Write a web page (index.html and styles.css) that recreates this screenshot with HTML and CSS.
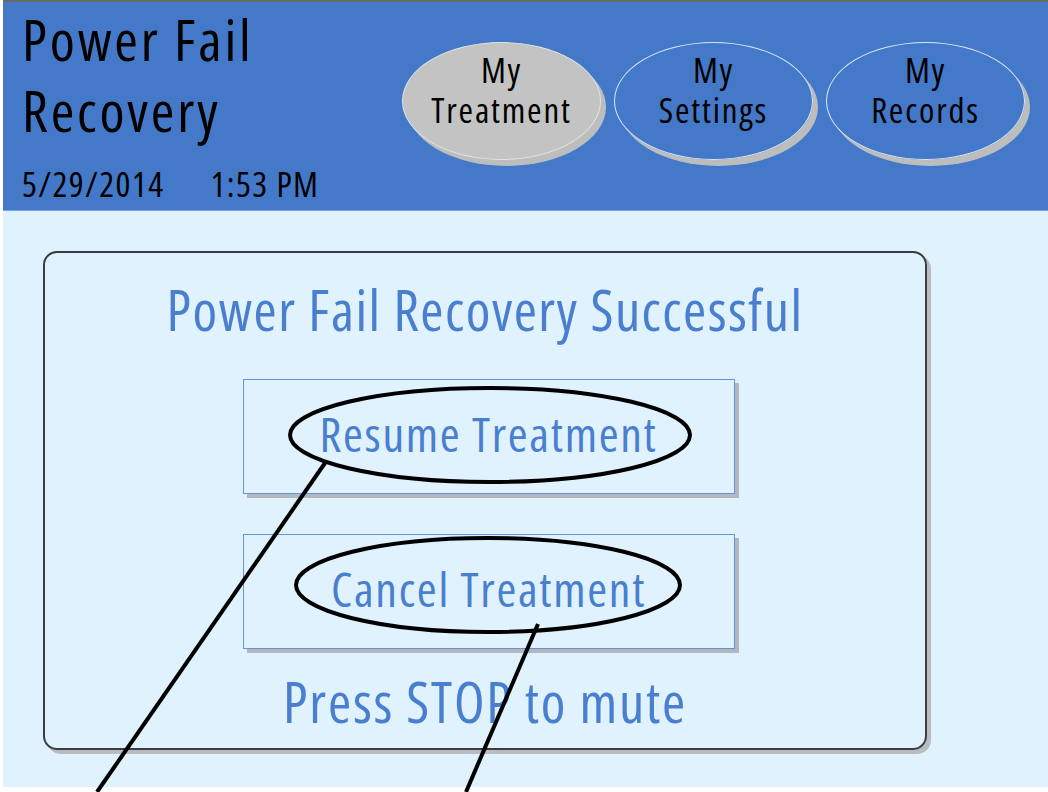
FILE: index.html
```html
<!DOCTYPE html>
<html lang="en">
<head>
    <meta charset="UTF-8">
    <meta name="viewport" content="width=device-width, initial-scale=1.0">
    <title>Power Fail Recovery</title>
    <link rel="stylesheet" href="styles.css">
</head>
<body>
    <div class="screen">
        <header class="header">
            <div class="title-block">
                <h1>Power Fail<br>Recovery</h1>
                <div class="datetime"><span>5/29/2014</span><span>1:53 PM</span></div>
            </div>
            <nav class="tabs">
                <div class="tab active">My<br>Treatment</div>
                <div class="tab">My<br>Settings</div>
                <div class="tab">My<br>Records</div>
            </nav>
        </header>

        <main class="content">
            <div class="panel">
                <h2>Power Fail Recovery Successful</h2>
                <div class="btn">Resume Treatment</div>
                <div class="btn">Cancel Treatment</div>
                <p class="hint">Press STOP to mute</p>
            </div>
        </main>
    </div>

    <!-- callout marks drawn over the screenshot -->
    <svg class="callouts" width="1048" height="792" viewBox="0 0 1048 792">
        <ellipse cx="490" cy="435" rx="200" ry="47" />
        <ellipse cx="488" cy="585" rx="192" ry="47" />
        <line x1="325" y1="463" x2="97" y2="792" />
        <line x1="538" y1="624" x2="466" y2="792" />
    </svg>
</body>
</html>
```

FILE: styles.css
```css
body {
    margin: 0;
    background: #ffffff;
    font-family: "Open Sans", "DejaVu Sans Condensed", sans-serif;
    font-stretch: 75%;
    width: 1048px;
    height: 792px;
    overflow: hidden;
    position: relative;
}

.screen {
    margin-left: 3px;
    width: 1045px;
    border-top: 2px solid #6a6a6a;
}

.header {
    height: 208px;
    background: #4479c9;
    border-bottom: 1px solid #7aa4e0;
    display: flex;
}

.title-block {
    padding: 2px 0 0 19px;
    width: 380px;
}

h1 {
    margin: 0;
    font-size: 57px;
    font-weight: normal;
    letter-spacing: 2.8px;
    line-height: 71px;
    color: #000;
}

.datetime {
    margin-top: 14px;
    font-size: 35px;
    letter-spacing: 1.4px;
    color: #000;
    display: flex;
    gap: 46px;
}

.tabs {
    display: flex;
    gap: 13px;
    padding-top: 40px;
}

.tab {
    width: 197px;
    height: 94px;
    border: 1.5px solid #dde6f4;
    border-radius: 50%;
    box-shadow: 5px 6px 0 #bdbdbd;
    display: flex;
    align-items: center;
    justify-content: center;
    text-align: center;
    font-size: 35px;
    letter-spacing: 1.8px;
    line-height: 40px;
    color: #000;
    padding-bottom: 22px;
    box-sizing: content-box;
}

.tab.active {
    background: #c3c3c3;
    border-color: #e2e2e2;
}

.content {
    height: 576px;
    background: #dff2fe;
    padding: 40px 0 0 40px;
    box-sizing: border-box;
}

.panel {
    width: 880px;
    height: 495px;
    border: 2px solid #3a3d42;
    border-radius: 14px;
    box-shadow: 4px 4px 0 #b9bcc0;
    display: flex;
    flex-direction: column;
    align-items: center;
    color: #4a7fd0;
}

h2 {
    margin: 24px 0 0;
    font-size: 56px;
    font-weight: normal;
    letter-spacing: 1.5px;
    line-height: 64px;
}

.btn {
    width: 490px;
    height: 107px;
    padding-bottom: 6px;
    margin-left: 7px;
    border: 1px solid #6592d8;
    box-shadow: 4px 4px 0 #b3b8c0;
    display: flex;
    align-items: center;
    justify-content: center;
    font-size: 48px;
    letter-spacing: 1.7px;
}

h2 + .btn {
    margin-top: 38px;
}

.btn + .btn {
    margin-top: 40px;
}

.hint {
    margin: 20px 0 0;
    font-size: 56px;
    letter-spacing: 1.8px;
    line-height: 64px;
}

.callouts {
    position: absolute;
    top: 0;
    left: 0;
    pointer-events: none;
    fill: none;
    stroke: #000;
    stroke-width: 4;
}
```
